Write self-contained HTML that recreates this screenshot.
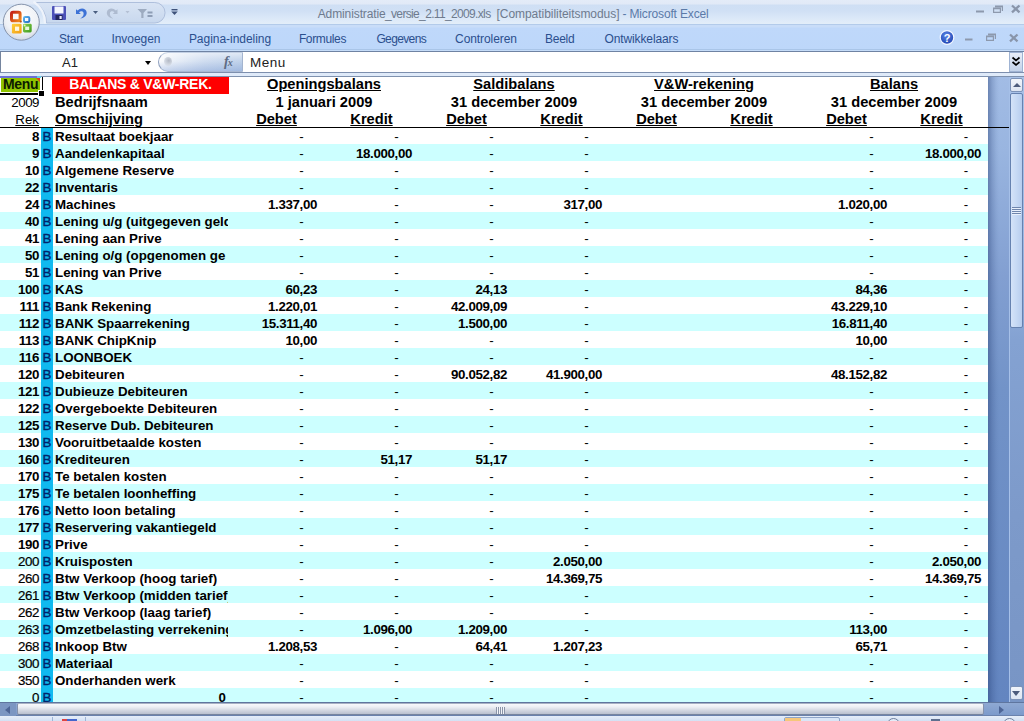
<!DOCTYPE html>
<html lang="nl">
<head>
<meta charset="utf-8">
<title>Administratie_versie_2.11_2009.xls [Compatibiliteitsmodus] - Microsoft Excel</title>
<style>
*{box-sizing:border-box;margin:0;padding:0}
html,body{width:1024px;height:721px;overflow:hidden;background:#fff}
body{position:relative;font-family:"Liberation Sans",Arial,sans-serif;color:#000}
.abs{position:absolute}
/* ---------- chrome ---------- */
#title{position:absolute;left:0;top:0;width:1024px;height:25px;background:linear-gradient(#e4ecf8 0,#e2eaf7 4px,#cfdff4 5px,#d0e0f5 11px,#dbe8f8 18px,#e3eef9 24px,#b3cbea 24px)}
#title .t{position:absolute;left:0;top:7px;width:1024px;height:14px;font-size:12px;line-height:14px;color:#6e7b8e;white-space:nowrap}
#title .t span{position:absolute;top:0}
#tabs{position:absolute;left:0;top:25px;width:1024px;height:26px;background:linear-gradient(#c9ddf8 0,#c9ddf8 2px,#bfd8fa 3px,#bdd7fa 24px,#a9c5e8 24px,#a9c5e8 25px,#c5dcf8 25px)}
#tabs span{position:absolute;top:7px;font-size:12px;line-height:14px;color:#2b4f8e;white-space:nowrap}
#tabline{position:absolute;left:0;top:51px;width:1024px;height:1px;background:#6f83a3}
#fbar{position:absolute;left:0;top:52px;width:1024px;height:21px;background:#fff}
#fbar .nb{position:absolute;left:62px;top:3px;font-size:13px;line-height:15px;color:#222}
#fbar .fv{position:absolute;left:250px;top:3px;font-size:13.5px;line-height:15px;color:#222;letter-spacing:.5px}
#fgap{position:absolute;left:0;top:72px;width:1024px;height:5px;background:#dfeaf9;border-top:1px solid #7d8fae;border-bottom:1px solid #7f92af}
#band{position:absolute;left:988px;top:77px;width:21px;height:625px;background:linear-gradient(90deg,rgba(30,55,110,.42) 0,rgba(30,55,110,.2) 4px,rgba(30,55,110,.06) 8px,rgba(30,55,110,0) 11px),linear-gradient(#a2bce5 0,#99b5e0 12%,#829fd1 32%,#7293c8 50%,#6385c0 100%)}
#vsb{position:absolute;left:1009px;top:77px;width:15px;height:625px;border-left:1px solid #a6c0e8;background:linear-gradient(#a9c2e8 0,#9fbae4 25%,#84a2d2 42%,#7d9aca 70%,#7895c5 100%)}
#hsb{position:absolute;left:0;top:702px;width:1024px;height:14px;background:linear-gradient(#8fa9d3,#7c9acb);border-top:1px solid #5f769f;border-bottom:1px solid #6a82ad}
#status{position:absolute;left:0;top:716px;width:1024px;height:5px;background:linear-gradient(#e6eef9,#d3e1f4);overflow:hidden}
/* ---------- sheet ---------- */
#sheet{position:absolute;left:0;top:76px;width:988px;height:626px;background:#fff;overflow:hidden}
.r{position:absolute;left:0;width:988px;height:17px;font-weight:bold;font-size:13.33px;line-height:17px;white-space:nowrap}
.r.c{background:#ccffff}
.r span{position:absolute;top:0;height:17px;padding-top:1px}
.a{right:949px;text-align:right;letter-spacing:-.4px}
.a.l{font-weight:normal;-webkit-text-stroke:.2px #000}
.b{left:41px;width:12px;background:#10b9ef;color:#00246b;text-align:center;font-weight:normal;-webkit-text-stroke:.35px #00246b}
.n{left:55px;width:173px;overflow:hidden}
.n.z{text-align:right;width:171px}
.v{text-align:right;letter-spacing:-.37px}
.d{width:20px;text-align:center;font-weight:normal}
.h{position:absolute;font-weight:bold;white-space:nowrap;line-height:17px}
.h11{font-size:14.67px}
.u{text-decoration:underline}
</style>
</head>
<body>
<div id="title">
  <svg class="abs" style="left:0;top:0" width="170" height="25" viewBox="0 0 170 25">
    <defs><linearGradient id="qg" x1="0" y1="0" x2="0" y2="1"><stop offset="0" stop-color="#d9e4f4"/><stop offset="1" stop-color="#c8d8ee"/></linearGradient></defs>
    <path d="M35.5 2.5 H154.8 A10.25 10.25 0 0 1 154.8 23 H46.5 A25.5 25.5 0 0 0 35.5 2.5 Z" fill="url(#qg)" stroke="#aebfdc" stroke-width="1"/>
    <path d="M33.5 1.5 A27 27 0 0 1 45 23.5" fill="none" stroke="#eef3fb" stroke-width="2.2"/>
  </svg>
  <svg class="abs" style="left:44px;top:0" width="140" height="25" viewBox="0 0 140 25">
    <!-- save -->
    <rect x="8" y="6" width="14" height="14" rx="1" fill="#4b50b8"/>
    <rect x="10.5" y="6.5" width="9" height="7" fill="#f4f6ff"/>
    <rect x="11.5" y="15" width="7" height="5" fill="#23265e"/>
    <rect x="15.5" y="16" width="2.2" height="3" fill="#e8ebff"/>
    <!-- undo -->
    <path d="M32 9.2 L32 14 L36.8 14 L35 12.2 C36.6 10.6 39.3 10.9 39.6 13.2 C39.9 15.6 38.4 17.3 36.2 18.4 C40.6 17.8 43.2 15.2 42.6 11.9 C42 8.2 36.6 6.9 33.6 10.6 Z" fill="#3d72d6"/>
    <path d="M49 11 L54 11 L51.5 14 Z" fill="#4a5e80"/>
    <!-- redo -->
    <path d="M73.5 9.2 L73.5 14 L68.7 14 L70.5 12.2 C68.9 10.6 66.2 10.9 65.9 13.2 C65.6 15.6 67.1 17.3 69.3 18.4 C64.9 17.8 62.3 15.2 62.9 11.9 C63.5 8.2 68.9 6.9 71.9 10.6 Z" fill="#aebbd0"/>
    <path d="M81.5 11 L85.5 11 L83.5 13.5 Z" fill="#b4c0d4"/>
    <!-- filter -->
    <path d="M93.5 9 L103 9 L99.5 13 L99.5 18 L97.3 18 L97.3 13 Z" fill="#9dabc0"/>
    <rect x="103.5" y="11.5" width="5" height="2" fill="#8e9db5"/>
    <rect x="103.5" y="15" width="5" height="2" fill="#8e9db5"/>
    <!-- customize -->
    <rect x="127.5" y="9" width="6" height="1.4" fill="#3e527a"/>
    <path d="M127.2 11.6 L133.8 11.6 L130.5 15 Z" fill="#3e527a"/>
  </svg>
  <div class="t"><span style="left:317.7px;letter-spacing:-.105px">Administratie</span><span style="left:385px;letter-spacing:-.653px">_versie_2.11_2009.xls</span><span style="left:496.5px;letter-spacing:-.046px">[Compatibiliteitsmodus]</span><span style="left:622.5px;letter-spacing:-.158px;color:#5b7aa8">- Microsoft Excel</span></div>
  <svg class="abs" style="left:970px;top:0" width="54" height="25" viewBox="0 0 54 25">
    <rect x="6" y="10.5" width="8" height="2" fill="#8d99ad"/>
    <path d="M25 5.5h8v5.5h-1.2v-3.8h-5.6v-0h-1.2z M23 7.5h8v5.5h-8z M24.2 9.2v2.6h5.6v-2.6z" fill="#8d99ad" fill-rule="evenodd"/>
    <path d="M42 5.5 L49.5 12.3 M49.5 5.5 L42 12.3" fill="none" stroke="#8995aa" stroke-width="2.3"/>
  </svg>
</div>
<svg class="abs" style="left:0;top:0;z-index:5" width="44" height="44" viewBox="0 0 44 44">
  <defs>
    <radialGradient id="og" cx="50%" cy="35%" r="65%"><stop offset="0" stop-color="#ffffff"/><stop offset=".7" stop-color="#eef1f6"/><stop offset="1" stop-color="#d3d9e4"/></radialGradient>
    <linearGradient id="lr" x1="0" y1="0" x2="1" y2="1"><stop offset="0" stop-color="#c4201a"/><stop offset="1" stop-color="#f08a1c"/></linearGradient>
    <linearGradient id="ly" x1="0" y1="0" x2="1" y2="1"><stop offset="0" stop-color="#ffd23a"/><stop offset="1" stop-color="#f19a12"/></linearGradient>
    <linearGradient id="lg" x1="0" y1="0" x2="1" y2="1"><stop offset="0" stop-color="#8fd04a"/><stop offset="1" stop-color="#3c9a1e"/></linearGradient>
    <linearGradient id="lb" x1="0" y1="0" x2="1" y2="1"><stop offset="0" stop-color="#58b4ee"/><stop offset="1" stop-color="#2a72c8"/></linearGradient>
  </defs>
  <circle cx="21.3" cy="22.2" r="18" fill="url(#og)" stroke="#8593ab" stroke-width="1"/>
  <rect x="11.5" y="12.3" width="8.6" height="8.5" rx="1.6" fill="none" stroke="url(#lr)" stroke-width="3"/>
  <circle cx="20.8" cy="21.6" r="1.1" fill="#b8561a"/>
  <rect x="24" y="16.9" width="5.3" height="5.1" rx="1.2" fill="none" stroke="url(#lb)" stroke-width="2"/>
  <rect x="11.9" y="23.8" width="9.7" height="9.7" rx="1.2" fill="url(#ly)"/>
  <rect x="15" y="26.6" width="4.2" height="4.2" fill="#fff8e0"/>
  <rect x="23" y="23.8" width="8.7" height="8.6" rx="1.4" fill="url(#lg)"/>
  <rect x="25.2" y="26.6" width="4" height="3.4" fill="#e9f7dc"/>
  <circle cx="24.6" cy="25.4" r="1" fill="#dff2cf"/>
</svg>
<div id="tabs">
  <span style="left:58.9px;letter-spacing:-0.249px">Start</span>
  <span style="left:111.4px;letter-spacing:-0.036px">Invoegen</span>
  <span style="left:188.9px;letter-spacing:-0.036px">Pagina-indeling</span>
  <span style="left:298.9px;letter-spacing:-0.352px">Formules</span>
  <span style="left:376.4px;letter-spacing:-0.625px">Gegevens</span>
  <span style="left:455.1px;letter-spacing:-0.091px">Controleren</span>
  <span style="left:545.1px;letter-spacing:-0.301px">Beeld</span>
  <span style="left:604.5px;letter-spacing:-0.12px">Ontwikkelaars</span>
  <svg class="abs" style="left:936px;top:.5px" width="88" height="25" viewBox="0 0 88 25">
    <defs><radialGradient id="hg" cx="45%" cy="35%" r="70%"><stop offset="0" stop-color="#5b86e6"/><stop offset="1" stop-color="#1b3fae"/></radialGradient></defs>
    <circle cx="11" cy="11.5" r="6.8" fill="url(#hg)" stroke="#f3f7ff" stroke-width="1.2"/>
    <text x="11" y="15.6" font-family="Liberation Sans, sans-serif" font-weight="bold" font-size="11" fill="#fff" text-anchor="middle">?</text>
    <rect x="29" y="12.5" width="7.5" height="2" fill="#8d99ad"/>
    <path d="M52 7.5h8v5.5h-1.2v-3.8h-5.6v-0h-1.2z M50 9.5h8v5.5h-8z M51.2 11.2v2.6h5.6v-2.6z" fill="#8d99ad" fill-rule="evenodd"/>
    <path d="M74 8.5 L81.5 15.3 M81.5 8.5 L74 15.3" fill="none" stroke="#8995aa" stroke-width="2.3"/>
  </svg>
</div>
<div id="tabline"></div>
<div id="fbar">
  <div class="abs" style="left:0;top:0;width:1px;height:21px;background:#75859f"></div>
  <span class="nb">A1</span>
  <div class="abs" style="left:145px;top:9px;width:0;height:0;border-left:3.5px solid transparent;border-right:3.5px solid transparent;border-top:4px solid #000"></div>
  <div class="abs" style="left:158px;top:0;width:85px;height:20px;border-left:1px solid #8e9fbd;border-right:1px solid #a3b4cf;border-top:1px solid #c3d0e4;border-bottom:1px solid #a9b9d3;border-radius:10px 0 0 10px;background:linear-gradient(rgba(255,255,255,.5),rgba(255,255,255,0) 45%,rgba(90,130,200,.3)),linear-gradient(90deg,#fbfcfe 0,#e9eff8 18%,#d0ddf0 55%,#c0d2ea 100%)"></div>
  <div class="abs" style="left:164px;top:5px;width:8px;height:9px;border-radius:50%;background:radial-gradient(circle at 60% 40%,#b3b9c5 0,#d3d9e3 55%,rgba(235,240,248,0) 100%)"></div>
  <span class="abs" style="left:224px;top:2px;font:italic bold 14px 'Liberation Serif',serif;color:#5d6b84;letter-spacing:-1px">f<span style="font-size:10px">x</span></span>
  <span class="fv">Menu</span>
  <div class="abs" style="left:1009px;top:0;width:14px;height:20px;border:1px solid #9fb3d3;background:linear-gradient(#e8eef8,#c3d3ea)"></div>
  <svg class="abs" style="left:1009px;top:0" width="14" height="20" viewBox="0 0 14 20"><path d="M3.5 5.5 L7 8.5 L10.5 5.5 M3.5 10 L7 13 L10.5 10" fill="none" stroke="#000" stroke-width="1.7"/></svg>
</div>
<div id="fgap"></div>
<div id="sheet">
  <div class="abs" style="left:0;top:0;width:37px;height:2px;background:#6b70d6"></div>
  <div class="abs" style="left:37px;top:0;width:4px;height:2px;background:#5fd0e6"></div>
  <div class="abs" style="left:1px;top:2px;width:39px;height:14px;background:#8fc400"></div>
  <div class="abs" style="left:0;top:17.4px;width:43px;height:1.6px;background:#000"></div>
  <div class="abs" style="left:41.5px;top:1px;width:1.5px;height:17px;background:#000"></div>
  <div class="abs" style="left:38px;top:14px;width:6px;height:6px;background:#000;border-top:1px solid #fff;border-left:1px solid #fff"></div>
  <div class="abs" style="left:36px;top:2px;width:0;height:0;border-top:4px solid #e8401a;border-left:4px solid transparent"></div>
  <div class="h" style="left:3px;top:0;font-size:14px;letter-spacing:-.35px;color:#0c1a00">Menu</div>
  <div class="abs" style="left:52px;top:1px;width:177px;height:17px;background:#ff0000"></div>
  <div class="h" style="left:52px;top:0;width:177px;text-align:center;color:#fff;font-size:14px;letter-spacing:-.26px">BALANS &amp; V&amp;W-REK.</div>
  <div class="h" style="left:0;top:18px;width:39px;text-align:right;font-weight:normal;font-size:13.33px;letter-spacing:-.5px">2009</div>
  <div class="h u" style="left:0;top:35px;width:39px;text-align:right;font-weight:normal;font-size:13.33px">Rek</div>
  <div class="h h11" style="left:55px;top:18px">Bedrijfsnaam</div>
  <div class="h h11 u" style="left:55px;top:35px">Omschijving</div>
<div class="h h11 u" style="left:229px;top:0;width:190px;text-align:center">Openingsbalans</div>
<div class="h h11" style="left:229px;top:18px;width:190px;text-align:center">1 januari 2009</div>
<div class="h h11 u" style="left:229px;top:35px;width:95px;text-align:center">Debet</div>
<div class="h h11 u" style="left:324px;top:35px;width:95px;text-align:center">Kredit</div>
<div class="h h11 u" style="left:419px;top:0;width:190px;text-align:center">Saldibalans</div>
<div class="h h11" style="left:419px;top:18px;width:190px;text-align:center">31 december 2009</div>
<div class="h h11 u" style="left:419px;top:35px;width:95px;text-align:center">Debet</div>
<div class="h h11 u" style="left:514px;top:35px;width:95px;text-align:center">Kredit</div>
<div class="h h11 u" style="left:609px;top:0;width:190px;text-align:center">V&amp;W-rekening</div>
<div class="h h11" style="left:609px;top:18px;width:190px;text-align:center">31 december 2009</div>
<div class="h h11 u" style="left:609px;top:35px;width:95px;text-align:center">Debet</div>
<div class="h h11 u" style="left:704px;top:35px;width:95px;text-align:center">Kredit</div>
<div class="h h11 u" style="left:799px;top:0;width:190px;text-align:center">Balans</div>
<div class="h h11" style="left:799px;top:18px;width:190px;text-align:center">31 december 2009</div>
<div class="h h11 u" style="left:799px;top:35px;width:95px;text-align:center">Debet</div>
<div class="h h11 u" style="left:894px;top:35px;width:95px;text-align:center">Kredit</div>
</div>
<div id="rows" style="position:absolute;left:0;top:0;width:988px;height:702px;overflow:hidden">
<div class="r" style="top:127px"><span class="a">8</span><span class="b">B</span><span class="n">Resultaat boekjaar</span><span class="d" style="left:291.5px">-</span><span class="d" style="left:386.5px">-</span><span class="d" style="left:481.5px">-</span><span class="d" style="left:576.5px">-</span><span class="d" style="left:861.5px">-</span><span class="d" style="left:956px">-</span></div>
<div class="r c" style="top:144px"><span class="a">9</span><span class="b">B</span><span class="n">Aandelenkapitaal</span><span class="d" style="left:291.5px">-</span><span class="v" style="right:576px">18.000,00</span><span class="d" style="left:481.5px">-</span><span class="d" style="left:576.5px">-</span><span class="d" style="left:861.5px">-</span><span class="v" style="right:7px">18.000,00</span></div>
<div class="r" style="top:161px"><span class="a">10</span><span class="b">B</span><span class="n">Algemene Reserve</span><span class="d" style="left:291.5px">-</span><span class="d" style="left:386.5px">-</span><span class="d" style="left:481.5px">-</span><span class="d" style="left:576.5px">-</span><span class="d" style="left:861.5px">-</span><span class="d" style="left:956px">-</span></div>
<div class="r c" style="top:178px"><span class="a">22</span><span class="b">B</span><span class="n">Inventaris</span><span class="d" style="left:291.5px">-</span><span class="d" style="left:386.5px">-</span><span class="d" style="left:481.5px">-</span><span class="d" style="left:576.5px">-</span><span class="d" style="left:861.5px">-</span><span class="d" style="left:956px">-</span></div>
<div class="r" style="top:195px"><span class="a">24</span><span class="b">B</span><span class="n">Machines</span><span class="v" style="right:671px">1.337,00</span><span class="d" style="left:386.5px">-</span><span class="d" style="left:481.5px">-</span><span class="v" style="right:386px">317,00</span><span class="v" style="right:101px">1.020,00</span><span class="d" style="left:956px">-</span></div>
<div class="r c" style="top:212px"><span class="a">40</span><span class="b">B</span><span class="n">Lening u/g (uitgegeven geld)</span><span class="d" style="left:291.5px">-</span><span class="d" style="left:386.5px">-</span><span class="d" style="left:481.5px">-</span><span class="d" style="left:576.5px">-</span><span class="d" style="left:861.5px">-</span><span class="d" style="left:956px">-</span></div>
<div class="r" style="top:229px"><span class="a">41</span><span class="b">B</span><span class="n">Lening aan Prive</span><span class="d" style="left:291.5px">-</span><span class="d" style="left:386.5px">-</span><span class="d" style="left:481.5px">-</span><span class="d" style="left:576.5px">-</span><span class="d" style="left:861.5px">-</span><span class="d" style="left:956px">-</span></div>
<div class="r c" style="top:246px"><span class="a">50</span><span class="b">B</span><span class="n">Lening o/g (opgenomen ge</span><span class="d" style="left:291.5px">-</span><span class="d" style="left:386.5px">-</span><span class="d" style="left:481.5px">-</span><span class="d" style="left:576.5px">-</span><span class="d" style="left:861.5px">-</span><span class="d" style="left:956px">-</span></div>
<div class="r" style="top:263px"><span class="a">51</span><span class="b">B</span><span class="n">Lening van Prive</span><span class="d" style="left:291.5px">-</span><span class="d" style="left:386.5px">-</span><span class="d" style="left:481.5px">-</span><span class="d" style="left:576.5px">-</span><span class="d" style="left:861.5px">-</span><span class="d" style="left:956px">-</span></div>
<div class="r c" style="top:280px"><span class="a">100</span><span class="b">B</span><span class="n">KAS</span><span class="v" style="right:671px">60,23</span><span class="d" style="left:386.5px">-</span><span class="v" style="right:481px">24,13</span><span class="d" style="left:576.5px">-</span><span class="v" style="right:101px">84,36</span><span class="d" style="left:956px">-</span></div>
<div class="r" style="top:297px"><span class="a">111</span><span class="b">B</span><span class="n">Bank Rekening</span><span class="v" style="right:671px">1.220,01</span><span class="d" style="left:386.5px">-</span><span class="v" style="right:481px">42.009,09</span><span class="d" style="left:576.5px">-</span><span class="v" style="right:101px">43.229,10</span><span class="d" style="left:956px">-</span></div>
<div class="r c" style="top:314px"><span class="a">112</span><span class="b">B</span><span class="n">BANK Spaarrekening</span><span class="v" style="right:671px">15.311,40</span><span class="d" style="left:386.5px">-</span><span class="v" style="right:481px">1.500,00</span><span class="d" style="left:576.5px">-</span><span class="v" style="right:101px">16.811,40</span><span class="d" style="left:956px">-</span></div>
<div class="r" style="top:331px"><span class="a">113</span><span class="b">B</span><span class="n">BANK ChipKnip</span><span class="v" style="right:671px">10,00</span><span class="d" style="left:386.5px">-</span><span class="d" style="left:481.5px">-</span><span class="d" style="left:576.5px">-</span><span class="v" style="right:101px">10,00</span><span class="d" style="left:956px">-</span></div>
<div class="r c" style="top:348px"><span class="a">116</span><span class="b">B</span><span class="n">LOONBOEK</span><span class="d" style="left:291.5px">-</span><span class="d" style="left:386.5px">-</span><span class="d" style="left:481.5px">-</span><span class="d" style="left:576.5px">-</span><span class="d" style="left:861.5px">-</span><span class="d" style="left:956px">-</span></div>
<div class="r" style="top:365px"><span class="a">120</span><span class="b">B</span><span class="n">Debiteuren</span><span class="d" style="left:291.5px">-</span><span class="d" style="left:386.5px">-</span><span class="v" style="right:481px">90.052,82</span><span class="v" style="right:386px">41.900,00</span><span class="v" style="right:101px">48.152,82</span><span class="d" style="left:956px">-</span></div>
<div class="r c" style="top:382px"><span class="a">121</span><span class="b">B</span><span class="n">Dubieuze Debiteuren</span><span class="d" style="left:291.5px">-</span><span class="d" style="left:386.5px">-</span><span class="d" style="left:481.5px">-</span><span class="d" style="left:576.5px">-</span><span class="d" style="left:861.5px">-</span><span class="d" style="left:956px">-</span></div>
<div class="r" style="top:399px"><span class="a">122</span><span class="b">B</span><span class="n">Overgeboekte Debiteuren</span><span class="d" style="left:291.5px">-</span><span class="d" style="left:386.5px">-</span><span class="d" style="left:481.5px">-</span><span class="d" style="left:576.5px">-</span><span class="d" style="left:861.5px">-</span><span class="d" style="left:956px">-</span></div>
<div class="r c" style="top:416px"><span class="a">125</span><span class="b">B</span><span class="n">Reserve Dub. Debiteuren</span><span class="d" style="left:291.5px">-</span><span class="d" style="left:386.5px">-</span><span class="d" style="left:481.5px">-</span><span class="d" style="left:576.5px">-</span><span class="d" style="left:861.5px">-</span><span class="d" style="left:956px">-</span></div>
<div class="r" style="top:433px"><span class="a">130</span><span class="b">B</span><span class="n">Vooruitbetaalde kosten</span><span class="d" style="left:291.5px">-</span><span class="d" style="left:386.5px">-</span><span class="d" style="left:481.5px">-</span><span class="d" style="left:576.5px">-</span><span class="d" style="left:861.5px">-</span><span class="d" style="left:956px">-</span></div>
<div class="r c" style="top:450px"><span class="a">160</span><span class="b">B</span><span class="n">Krediteuren</span><span class="d" style="left:291.5px">-</span><span class="v" style="right:576px">51,17</span><span class="v" style="right:481px">51,17</span><span class="d" style="left:576.5px">-</span><span class="d" style="left:861.5px">-</span><span class="d" style="left:956px">-</span></div>
<div class="r" style="top:467px"><span class="a">170</span><span class="b">B</span><span class="n">Te betalen kosten</span><span class="d" style="left:291.5px">-</span><span class="d" style="left:386.5px">-</span><span class="d" style="left:481.5px">-</span><span class="d" style="left:576.5px">-</span><span class="d" style="left:861.5px">-</span><span class="d" style="left:956px">-</span></div>
<div class="r c" style="top:484px"><span class="a">175</span><span class="b">B</span><span class="n">Te betalen loonheffing</span><span class="d" style="left:291.5px">-</span><span class="d" style="left:386.5px">-</span><span class="d" style="left:481.5px">-</span><span class="d" style="left:576.5px">-</span><span class="d" style="left:861.5px">-</span><span class="d" style="left:956px">-</span></div>
<div class="r" style="top:501px"><span class="a">176</span><span class="b">B</span><span class="n">Netto loon betaling</span><span class="d" style="left:291.5px">-</span><span class="d" style="left:386.5px">-</span><span class="d" style="left:481.5px">-</span><span class="d" style="left:576.5px">-</span><span class="d" style="left:861.5px">-</span><span class="d" style="left:956px">-</span></div>
<div class="r c" style="top:518px"><span class="a">177</span><span class="b">B</span><span class="n">Reservering vakantiegeld</span><span class="d" style="left:291.5px">-</span><span class="d" style="left:386.5px">-</span><span class="d" style="left:481.5px">-</span><span class="d" style="left:576.5px">-</span><span class="d" style="left:861.5px">-</span><span class="d" style="left:956px">-</span></div>
<div class="r" style="top:535px"><span class="a">190</span><span class="b">B</span><span class="n">Prive</span><span class="d" style="left:291.5px">-</span><span class="d" style="left:386.5px">-</span><span class="d" style="left:481.5px">-</span><span class="d" style="left:576.5px">-</span><span class="d" style="left:861.5px">-</span><span class="d" style="left:956px">-</span></div>
<div class="r c" style="top:552px"><span class="a l">200</span><span class="b">B</span><span class="n">Kruisposten</span><span class="d" style="left:291.5px">-</span><span class="d" style="left:386.5px">-</span><span class="d" style="left:481.5px">-</span><span class="v" style="right:386px">2.050,00</span><span class="d" style="left:861.5px">-</span><span class="v" style="right:7px">2.050,00</span></div>
<div class="r" style="top:569px"><span class="a l">260</span><span class="b">B</span><span class="n">Btw Verkoop (hoog tarief)</span><span class="d" style="left:291.5px">-</span><span class="d" style="left:386.5px">-</span><span class="d" style="left:481.5px">-</span><span class="v" style="right:386px">14.369,75</span><span class="d" style="left:861.5px">-</span><span class="v" style="right:7px">14.369,75</span></div>
<div class="r c" style="top:586px"><span class="a l">261</span><span class="b">B</span><span class="n">Btw Verkoop (midden tarief)</span><span class="d" style="left:291.5px">-</span><span class="d" style="left:386.5px">-</span><span class="d" style="left:481.5px">-</span><span class="d" style="left:576.5px">-</span><span class="d" style="left:861.5px">-</span><span class="d" style="left:956px">-</span></div>
<div class="r" style="top:603px"><span class="a l">262</span><span class="b">B</span><span class="n">Btw Verkoop (laag tarief)</span><span class="d" style="left:291.5px">-</span><span class="d" style="left:386.5px">-</span><span class="d" style="left:481.5px">-</span><span class="d" style="left:576.5px">-</span><span class="d" style="left:861.5px">-</span><span class="d" style="left:956px">-</span></div>
<div class="r c" style="top:620px"><span class="a l">263</span><span class="b">B</span><span class="n">Omzetbelasting verrekening</span><span class="d" style="left:291.5px">-</span><span class="v" style="right:576px">1.096,00</span><span class="v" style="right:481px">1.209,00</span><span class="d" style="left:576.5px">-</span><span class="v" style="right:101px">113,00</span><span class="d" style="left:956px">-</span></div>
<div class="r" style="top:637px"><span class="a l">268</span><span class="b">B</span><span class="n">Inkoop Btw</span><span class="v" style="right:671px">1.208,53</span><span class="d" style="left:386.5px">-</span><span class="v" style="right:481px">64,41</span><span class="v" style="right:386px">1.207,23</span><span class="v" style="right:101px">65,71</span><span class="d" style="left:956px">-</span></div>
<div class="r c" style="top:654px"><span class="a l">300</span><span class="b">B</span><span class="n">Materiaal</span><span class="d" style="left:291.5px">-</span><span class="d" style="left:386.5px">-</span><span class="d" style="left:481.5px">-</span><span class="d" style="left:576.5px">-</span><span class="d" style="left:861.5px">-</span><span class="d" style="left:956px">-</span></div>
<div class="r" style="top:671px"><span class="a l">350</span><span class="b">B</span><span class="n">Onderhanden werk</span><span class="d" style="left:291.5px">-</span><span class="d" style="left:386.5px">-</span><span class="d" style="left:481.5px">-</span><span class="d" style="left:576.5px">-</span><span class="d" style="left:861.5px">-</span><span class="d" style="left:956px">-</span></div>
<div class="r c" style="top:688px"><span class="a l">0</span><span class="b">B</span><span class="n z">0</span><span class="d" style="left:291.5px">-</span><span class="d" style="left:386.5px">-</span><span class="d" style="left:481.5px">-</span><span class="d" style="left:576.5px">-</span><span class="d" style="left:861.5px">-</span><span class="d" style="left:956px">-</span></div>
</div>
<div class="abs" style="left:41px;top:76px;width:983px;height:1px;background:#7f92af"></div>
<div id="band"></div>
<div class="abs" style="left:0;top:127px;width:1009px;height:1px;background:#000"></div>
<div id="vsb">
  <div class="abs" style="left:0;top:1px;width:13px;height:14px;border:1px solid #7d93b8;border-radius:2px;background:linear-gradient(#f1f5fb,#dde5f2)"></div>
  <div class="abs" style="left:3px;top:5.5px;width:0;height:0;border-left:4.5px solid transparent;border-right:4.5px solid transparent;border-bottom:4.5px solid #4d5c7c"></div>
  <div class="abs" style="left:0;top:16px;width:13px;height:235px;border:1px solid #6682b0;border-radius:2px;background:linear-gradient(90deg,#d4e3f8 0,#c6d9f4 50%,#b7cdee 100%)"></div>
  <div class="abs" style="left:2px;top:130px;width:9px;height:8px;background:repeating-linear-gradient(#6f86ad 0,#6f86ad 1px,#e8f0fc 1px,#e8f0fc 2px)"></div>
  <div class="abs" style="left:0;top:609px;width:13px;height:14px;border:1px solid #7d93b8;border-radius:2px;background:linear-gradient(#f1f5fb,#dde5f2)"></div>
  <div class="abs" style="left:2px;top:614px;width:0;height:0;border-left:4.5px solid transparent;border-right:4.5px solid transparent;border-top:5px solid #4d5c7c"></div>
</div>
<div id="hsb">
  <div class="abs" style="left:0;top:0;width:16px;height:13px;background:#7b96c2"></div>
  <div class="abs" style="left:5px;top:3px;width:0;height:0;border-top:4.5px solid transparent;border-bottom:4.5px solid transparent;border-right:5px solid #4d6596"></div>
  <div class="abs" style="left:17px;top:0;width:967px;height:12px;border:1px solid #8592ab;border-top-color:#a7b1c4;border-bottom-color:#77859f;border-radius:2px;background:linear-gradient(#f8f9fc 0,#eceff4 30%,#d9dde6 55%,#b9c0ce 100%)"></div>
  <div class="abs" style="left:496px;top:4px;width:9px;height:7px;background:repeating-linear-gradient(90deg,#8a94a8 0,#8a94a8 1px,#f2f4f8 1px,#f2f4f8 2px)"></div>
  <div class="abs" style="left:999px;top:3px;width:0;height:0;border-top:4.5px solid transparent;border-bottom:4.5px solid transparent;border-left:5px solid #4d6596"></div>
</div>
<div id="status">
  <div class="abs" style="left:52px;top:1px;width:1px;height:5px;background:#9fb4d6"></div>
  <div class="abs" style="left:62px;top:3px;width:15px;height:4px;background:linear-gradient(90deg,#d44 0,#d44 30%,#46c 30%)"></div>
  <div class="abs" style="left:85px;top:1px;width:1px;height:5px;background:#9fb4d6"></div>
  <div class="abs" style="left:784px;top:1px;width:56px;height:8px;border:1px solid #8fa5c8;border-radius:2px;background:#d9e6f7"></div>
  <div class="abs" style="left:785px;top:2px;width:16px;height:6px;background:#f6c77a"></div>
  <div class="abs" style="left:887px;top:2px;width:13px;height:13px;border:1.5px solid #6d7f9e;border-radius:50%;background:#e4ecf8"></div>
  <div class="abs" style="left:931px;top:3px;width:9px;height:6px;background:#5d6f8f"></div>
  <div class="abs" style="left:1003px;top:2px;width:13px;height:13px;border:1.5px solid #6d7f9e;border-radius:50%;background:#e4ecf8"></div>
</div>
</body>
</html>
